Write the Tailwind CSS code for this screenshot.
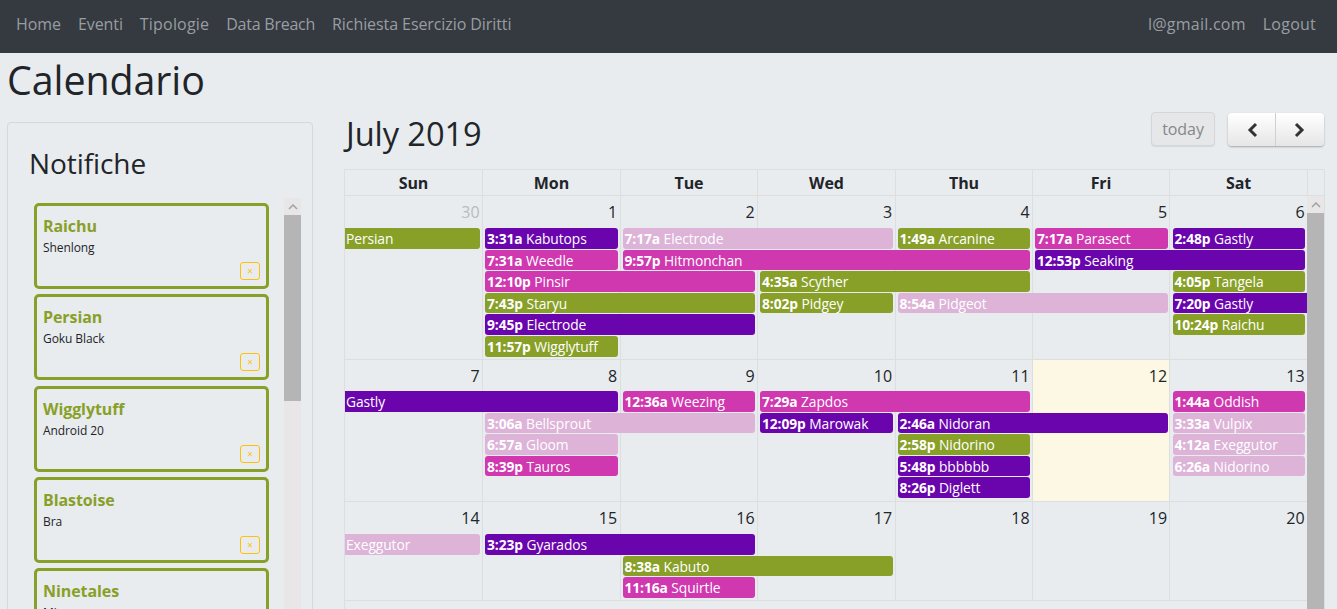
<!DOCTYPE html>
<html lang="it">
<head>
    <meta charset="UTF-8">
    <title>Calendario</title>
    <script src="https://cdn.jsdelivr.net/npm/@tailwindcss/browser@4"></script>
</head>
<body class="bg-[#e9ecef] text-[#212529] h-[609px] overflow-hidden font-['Open_Sans',sans-serif] tracking-[-0.005em]">
    <!-- Navbar -->
    <nav class="h-[53px] bg-[#343a40] text-[#9a9da0] text-base flex items-center justify-between pl-4 pr-[21px] pb-[6px]">
        <div class="flex gap-[17px]">
            <span>Home</span><span>Eventi</span><span class="tracking-[0.012em]">Tipologie</span><span class="tracking-[-0.015em]">Data Breach</span><span>Richiesta Esercizio Diritti</span>
        </div>
        <div class="flex gap-[17px] tracking-[0.015em]">
            <span>l@gmail.com</span><span>Logout</span>
        </div>
    </nav>

    <main class="px-[7px]">
        <h1 class="text-[39.4px] leading-[48px] font-normal h-[69px] pt-[3px]">Calendario</h1>
        <div class="flex gap-[31px]">
            <!-- Notifiche -->
            <aside class="w-[306px] h-[600px] shrink-0 border border-[#d6d9dc] rounded-[4px] pl-[21px] pt-[20px]">
                <h2 class="text-[28px] leading-[40px] mb-[19px]">Notifiche</h2>
                <div class="flex gap-[15px]">
                    <div class="w-[235px] ml-[5px] flex flex-col gap-[5.25px] pt-[1px]">
                        <div class="h-[86px] shrink-0 border-[3px] border-[#88a028] rounded-[5px] px-[6px] pt-[8px] relative">
                            <div class="text-base leading-[25px] font-bold text-[#88a028]">Raichu</div>
                            <div class="text-xs leading-[18px]">Shenlong</div>
                            <button class="absolute right-[6px] bottom-[6px] w-5 h-[18px] border border-[#ffc107] rounded-[3px] text-[#ffc107] text-[10px] leading-none">×</button>
                        </div>
                        <div class="h-[86px] shrink-0 border-[3px] border-[#88a028] rounded-[5px] px-[6px] pt-[8px] relative">
                            <div class="text-base leading-[25px] font-bold text-[#88a028]">Persian</div>
                            <div class="text-xs leading-[18px]">Goku Black</div>
                            <button class="absolute right-[6px] bottom-[6px] w-5 h-[18px] border border-[#ffc107] rounded-[3px] text-[#ffc107] text-[10px] leading-none">×</button>
                        </div>
                        <div class="h-[86px] shrink-0 border-[3px] border-[#88a028] rounded-[5px] px-[6px] pt-[8px] relative">
                            <div class="text-base leading-[25px] font-bold text-[#88a028]">Wigglytuff</div>
                            <div class="text-xs leading-[18px]">Android 20</div>
                            <button class="absolute right-[6px] bottom-[6px] w-5 h-[18px] border border-[#ffc107] rounded-[3px] text-[#ffc107] text-[10px] leading-none">×</button>
                        </div>
                        <div class="h-[86px] shrink-0 border-[3px] border-[#88a028] rounded-[5px] px-[6px] pt-[8px] relative">
                            <div class="text-base leading-[25px] font-bold text-[#88a028]">Blastoise</div>
                            <div class="text-xs leading-[18px]">Bra</div>
                            <button class="absolute right-[6px] bottom-[6px] w-5 h-[18px] border border-[#ffc107] rounded-[3px] text-[#ffc107] text-[10px] leading-none">×</button>
                        </div>
                        <div class="h-[86px] shrink-0 border-[3px] border-[#88a028] rounded-[5px] px-[6px] pt-[8px] relative">
                            <div class="text-base leading-[25px] font-bold text-[#88a028]">Ninetales</div>
                            <div class="text-xs leading-[18px]">Mia</div>
                        </div>
                    </div>
                    <!-- scrollbar -->
                    <div class="w-[17px] h-[500px] bg-[#e8e6e6] -mt-[4px]">
                        <div class="h-[17px] flex items-center justify-center">
                            <svg width="10" height="6" viewBox="0 0 10 6" fill="none" stroke="#a3a3a3" stroke-width="1.5"><path d="M1 5l4-4 4 4"/></svg>
                        </div>
                        <div class="h-[186px] bg-[#b6b5b5]"></div>
                    </div>
                </div>
            </aside>

            <!-- Calendar -->
            <section class="w-[981px] shrink-0 -mt-[10px]">
                <div class="h-[57px] flex items-start justify-between pr-px">
                    <h2 class="text-[32.6px] leading-[44px] ml-[2px]">July 2019</h2>
                    <div class="flex items-start gap-[13px]">
                        <button class="w-[64px] h-[34px] border border-[#d5d6d7] rounded-[4px] bg-[#e6e7e9] text-[#85878a] text-base shadow-[0_1px_1px_rgba(0,0,0,0.08)]">today</button>
                        <div class="flex h-[33px] mt-px rounded-[4px] shadow-[0_1px_2px_rgba(0,0,0,0.3)] bg-gradient-to-b from-white to-[#e6e6e6]">
                            <button class="w-[48px] flex items-center justify-center border-r border-[#d0d0d0]">
                                <svg width="12" height="16" viewBox="0 0 12 16" fill="none" stroke="#333" stroke-width="3"><path d="M10 2L4 8l6 6"/></svg>
                            </button>
                            <button class="w-[48px] flex items-center justify-center">
                                <svg width="12" height="16" viewBox="0 0 12 16" fill="none" stroke="#333" stroke-width="3"><path d="M2 2l6 6-6 6"/></svg>
                            </button>
                        </div>
                    </div>
                </div>

                <!-- day header -->
                <div class="grid grid-cols-[138px_138px_137px_138px_137px_137px_138px_16px] h-[27px] border border-[#dcdee0] text-base font-bold leading-[26px] text-center">
                    <div class="border-r border-[#dcdee0]">Sun</div>
                    <div class="border-r border-[#dcdee0]">Mon</div>
                    <div class="border-r border-[#dcdee0]">Tue</div>
                    <div class="border-r border-[#dcdee0]">Wed</div>
                    <div class="border-r border-[#dcdee0]">Thu</div>
                    <div class="border-r border-[#dcdee0]">Fri</div>
                    <div class="border-r border-[#dcdee0]">Sat</div>
                    <div></div>
                </div>

                <div class="flex border-l border-r border-[#dcdee0]">
                    <div class="w-[962px] overflow-hidden">
                        <!-- week 1 -->
                        <div class="relative h-[164px] border-b border-[#dcdee0]">
                            <div class="absolute inset-0 grid grid-cols-[138px_138px_137px_138px_137px_137px_137px]">
                                <div class="border-r border-[#dcdee0]"></div><div class="border-r border-[#dcdee0]"></div><div class="border-r border-[#dcdee0]"></div><div class="border-r border-[#dcdee0]"></div><div class="border-r border-[#dcdee0]"></div><div class="border-r border-[#dcdee0]"></div><div></div>
                            </div>
                            <div class="relative grid grid-cols-[repeat(7,137.5px)] auto-rows-[32px] text-base leading-[32px] text-right">
                                <div class="pr-[3px] text-[#b9bbbd]">30</div><div class="pr-[3px]">1</div><div class="pr-[3px]">2</div><div class="pr-[3px]">3</div><div class="pr-[3px]">4</div><div class="pr-[3px]">5</div><div class="pr-[3px]">6</div>
                            </div>
                            <div class="relative grid grid-cols-[repeat(7,137.5px)] text-white text-[13.8px] leading-[22px] auto-rows-[21.6px]">
                                <div class="row-start-1 col-start-1 h-[20.6px] mr-[2.5px] pl-[1px] rounded-r-[3px] bg-[#88a028] overflow-hidden whitespace-nowrap">Persian</div>
                                <div class="row-start-1 col-start-2 h-[20.6px] ml-[2.5px] mr-[2.5px] px-[2px] rounded-[3px] bg-[#6a05ad] overflow-hidden whitespace-nowrap"><b>3:31a</b> Kabutops</div>
                                <div class="row-start-1 col-start-3 col-span-2 h-[20.6px] ml-[2.5px] mr-[2.5px] px-[2px] rounded-[3px] bg-[#ddb3d8] overflow-hidden whitespace-nowrap"><b>7:17a</b> Electrode</div>
                                <div class="row-start-1 col-start-5 h-[20.6px] ml-[2.5px] mr-[2.5px] px-[2px] rounded-[3px] bg-[#88a028] overflow-hidden whitespace-nowrap"><b>1:49a</b> Arcanine</div>
                                <div class="row-start-1 col-start-6 h-[20.6px] ml-[2.5px] mr-[2.5px] px-[2px] rounded-[3px] bg-[#d038b0] overflow-hidden whitespace-nowrap"><b>7:17a</b> Parasect</div>
                                <div class="row-start-1 col-start-7 h-[20.6px] ml-[2.5px] mr-[2.5px] px-[2px] rounded-[3px] bg-[#6a05ad] overflow-hidden whitespace-nowrap"><b>2:48p</b> Gastly</div>

                                <div class="row-start-2 col-start-2 h-[20.6px] ml-[2.5px] mr-[2.5px] px-[2px] rounded-[3px] bg-[#d038b0] overflow-hidden whitespace-nowrap"><b>7:31a</b> Weedle</div>
                                <div class="row-start-2 col-start-3 col-span-3 h-[20.6px] ml-[2.5px] mr-[2.5px] px-[2px] rounded-[3px] bg-[#d038b0] overflow-hidden whitespace-nowrap"><b>9:57p</b> Hitmonchan</div>
                                <div class="row-start-2 col-start-6 col-span-2 h-[20.6px] ml-[2.5px] mr-[2.5px] px-[2px] rounded-[3px] bg-[#6a05ad] overflow-hidden whitespace-nowrap"><b>12:53p</b> Seaking</div>

                                <div class="row-start-3 col-start-2 col-span-2 h-[20.6px] ml-[2.5px] mr-[2.5px] px-[2px] rounded-[3px] bg-[#d038b0] overflow-hidden whitespace-nowrap"><b>12:10p</b> Pinsir</div>
                                <div class="row-start-3 col-start-4 col-span-2 h-[20.6px] ml-[2.5px] mr-[2.5px] px-[2px] rounded-[3px] bg-[#88a028] overflow-hidden whitespace-nowrap"><b>4:35a</b> Scyther</div>
                                <div class="row-start-3 col-start-7 h-[20.6px] ml-[2.5px] mr-[2.5px] px-[2px] rounded-[3px] bg-[#88a028] overflow-hidden whitespace-nowrap"><b>4:05p</b> Tangela</div>

                                <div class="row-start-4 col-start-2 col-span-2 h-[20.6px] ml-[2.5px] mr-[2.5px] px-[2px] rounded-[3px] bg-[#88a028] overflow-hidden whitespace-nowrap"><b>7:43p</b> Staryu</div>
                                <div class="row-start-4 col-start-4 h-[20.6px] ml-[2.5px] mr-[2.5px] px-[2px] rounded-[3px] bg-[#88a028] overflow-hidden whitespace-nowrap"><b>8:02p</b> Pidgey</div>
                                <div class="row-start-4 col-start-5 col-span-2 h-[20.6px] ml-[2.5px] mr-[2.5px] px-[2px] rounded-[3px] bg-[#ddb3d8] overflow-hidden whitespace-nowrap"><b>8:54a</b> Pidgeot</div>
                                <div class="row-start-4 col-start-7 h-[20.6px] ml-[2.5px] px-[2px] rounded-l-[3px] bg-[#6a05ad] overflow-hidden whitespace-nowrap"><b>7:20p</b> Gastly</div>

                                <div class="row-start-5 col-start-2 col-span-2 h-[20.6px] ml-[2.5px] mr-[2.5px] px-[2px] rounded-[3px] bg-[#6a05ad] overflow-hidden whitespace-nowrap"><b>9:45p</b> Electrode</div>
                                <div class="row-start-5 col-start-7 h-[20.6px] ml-[2.5px] mr-[2.5px] px-[2px] rounded-[3px] bg-[#88a028] overflow-hidden whitespace-nowrap"><b>10:24p</b> Raichu</div>

                                <div class="row-start-6 col-start-2 h-[20.6px] ml-[2.5px] mr-[2.5px] px-[2px] rounded-[3px] bg-[#88a028] overflow-hidden whitespace-nowrap"><b>11:57p</b> Wigglytuff</div>
                            </div>
                        </div>

                        <!-- week 2 -->
                        <div class="relative h-[142px] border-b border-[#dcdee0]">
                            <div class="absolute inset-0 grid grid-cols-[138px_138px_137px_138px_137px_137px_137px]">
                                <div class="border-r border-[#dcdee0]"></div><div class="border-r border-[#dcdee0]"></div><div class="border-r border-[#dcdee0]"></div><div class="border-r border-[#dcdee0]"></div><div class="border-r border-[#dcdee0]"></div><div class="border-r border-[#dcdee0] bg-[#fcf8e3]"></div><div></div>
                            </div>
                            <div class="relative grid grid-cols-[repeat(7,137.5px)] auto-rows-[31px] text-base leading-[32px] text-right">
                                <div class="pr-[3px]">7</div><div class="pr-[3px]">8</div><div class="pr-[3px]">9</div><div class="pr-[3px]">10</div><div class="pr-[3px]">11</div><div class="pr-[3px]">12</div><div class="pr-[3px]">13</div>
                            </div>
                            <div class="relative grid grid-cols-[repeat(7,137.5px)] text-white text-[13.8px] leading-[22px] auto-rows-[21.6px]">
                                <div class="row-start-1 col-start-1 col-span-2 h-[20.6px] mr-[2.5px] pl-[1px] rounded-r-[3px] bg-[#6a05ad] overflow-hidden whitespace-nowrap">Gastly</div>
                                <div class="row-start-1 col-start-3 h-[20.6px] ml-[2.5px] mr-[2.5px] px-[2px] rounded-[3px] bg-[#d038b0] overflow-hidden whitespace-nowrap"><b>12:36a</b> Weezing</div>
                                <div class="row-start-1 col-start-4 col-span-2 h-[20.6px] ml-[2.5px] mr-[2.5px] px-[2px] rounded-[3px] bg-[#d038b0] overflow-hidden whitespace-nowrap"><b>7:29a</b> Zapdos</div>
                                <div class="row-start-1 col-start-7 h-[20.6px] ml-[2.5px] mr-[2.5px] px-[2px] rounded-[3px] bg-[#d038b0] overflow-hidden whitespace-nowrap"><b>1:44a</b> Oddish</div>

                                <div class="row-start-2 col-start-2 col-span-2 h-[20.6px] ml-[2.5px] mr-[2.5px] px-[2px] rounded-[3px] bg-[#ddb3d8] overflow-hidden whitespace-nowrap"><b>3:06a</b> Bellsprout</div>
                                <div class="row-start-2 col-start-4 h-[20.6px] ml-[2.5px] mr-[2.5px] px-[2px] rounded-[3px] bg-[#6a05ad] overflow-hidden whitespace-nowrap"><b>12:09p</b> Marowak</div>
                                <div class="row-start-2 col-start-5 col-span-2 h-[20.6px] ml-[2.5px] mr-[2.5px] px-[2px] rounded-[3px] bg-[#6a05ad] overflow-hidden whitespace-nowrap"><b>2:46a</b> Nidoran</div>
                                <div class="row-start-2 col-start-7 h-[20.6px] ml-[2.5px] mr-[2.5px] px-[2px] rounded-[3px] bg-[#ddb3d8] overflow-hidden whitespace-nowrap"><b>3:33a</b> Vulpix</div>

                                <div class="row-start-3 col-start-2 h-[20.6px] ml-[2.5px] mr-[2.5px] px-[2px] rounded-[3px] bg-[#ddb3d8] overflow-hidden whitespace-nowrap"><b>6:57a</b> Gloom</div>
                                <div class="row-start-3 col-start-5 h-[20.6px] ml-[2.5px] mr-[2.5px] px-[2px] rounded-[3px] bg-[#88a028] overflow-hidden whitespace-nowrap"><b>2:58p</b> Nidorino</div>
                                <div class="row-start-3 col-start-7 h-[20.6px] ml-[2.5px] mr-[2.5px] px-[2px] rounded-[3px] bg-[#ddb3d8] overflow-hidden whitespace-nowrap"><b>4:12a</b> Exeggutor</div>

                                <div class="row-start-4 col-start-2 h-[20.6px] ml-[2.5px] mr-[2.5px] px-[2px] rounded-[3px] bg-[#d038b0] overflow-hidden whitespace-nowrap"><b>8:39p</b> Tauros</div>
                                <div class="row-start-4 col-start-5 h-[20.6px] ml-[2.5px] mr-[2.5px] px-[2px] rounded-[3px] bg-[#6a05ad] overflow-hidden whitespace-nowrap"><b>5:48p</b> bbbbbb</div>
                                <div class="row-start-4 col-start-7 h-[20.6px] ml-[2.5px] mr-[2.5px] px-[2px] rounded-[3px] bg-[#ddb3d8] overflow-hidden whitespace-nowrap"><b>6:26a</b> Nidorino</div>

                                <div class="row-start-5 col-start-5 h-[20.6px] ml-[2.5px] mr-[2.5px] px-[2px] rounded-[3px] bg-[#6a05ad] overflow-hidden whitespace-nowrap"><b>8:26p</b> Diglett</div>
                            </div>
                        </div>

                        <!-- week 3 -->
                        <div class="relative h-[99px] border-b border-[#dcdee0]">
                            <div class="absolute inset-0 grid grid-cols-[138px_138px_137px_138px_137px_137px_137px]">
                                <div class="border-r border-[#dcdee0]"></div><div class="border-r border-[#dcdee0]"></div><div class="border-r border-[#dcdee0]"></div><div class="border-r border-[#dcdee0]"></div><div class="border-r border-[#dcdee0]"></div><div class="border-r border-[#dcdee0]"></div><div></div>
                            </div>
                            <div class="relative grid grid-cols-[repeat(7,137.5px)] auto-rows-[32px] text-base leading-[32px] text-right">
                                <div class="pr-[3px]">14</div><div class="pr-[3px]">15</div><div class="pr-[3px]">16</div><div class="pr-[3px]">17</div><div class="pr-[3px]">18</div><div class="pr-[3px]">19</div><div class="pr-[3px]">20</div>
                            </div>
                            <div class="relative grid grid-cols-[repeat(7,137.5px)] text-white text-[13.8px] leading-[22px] auto-rows-[21.6px]">
                                <div class="row-start-1 col-start-1 h-[20.6px] mr-[2.5px] pl-[1px] rounded-r-[3px] bg-[#ddb3d8] overflow-hidden whitespace-nowrap">Exeggutor</div>
                                <div class="row-start-1 col-start-2 col-span-2 h-[20.6px] ml-[2.5px] mr-[2.5px] px-[2px] rounded-[3px] bg-[#6a05ad] overflow-hidden whitespace-nowrap"><b>3:23p</b> Gyarados</div>
                                <div class="row-start-2 col-start-3 col-span-2 h-[20.6px] ml-[2.5px] mr-[2.5px] px-[2px] rounded-[3px] bg-[#88a028] overflow-hidden whitespace-nowrap"><b>8:38a</b> Kabuto</div>
                                <div class="row-start-3 col-start-3 h-[20.6px] ml-[2.5px] mr-[2.5px] px-[2px] rounded-[3px] bg-[#d038b0] overflow-hidden whitespace-nowrap"><b>11:16a</b> Squirtle</div>
                            </div>
                        </div>
                    </div>
                    <!-- calendar scrollbar -->
                    <div class="w-[17px] h-[420px] bg-[#e8e6e6]">
                        <div class="h-[17px] flex items-center justify-center">
                            <svg width="10" height="6" viewBox="0 0 10 6" fill="none" stroke="#a3a3a3" stroke-width="1.5"><path d="M1 5l4-4 4 4"/></svg>
                        </div>
                        <div class="h-[400px] bg-[#b6b5b5]"></div>
                    </div>
                </div>
            </section>
        </div>
    </main>
</body>
</html>
